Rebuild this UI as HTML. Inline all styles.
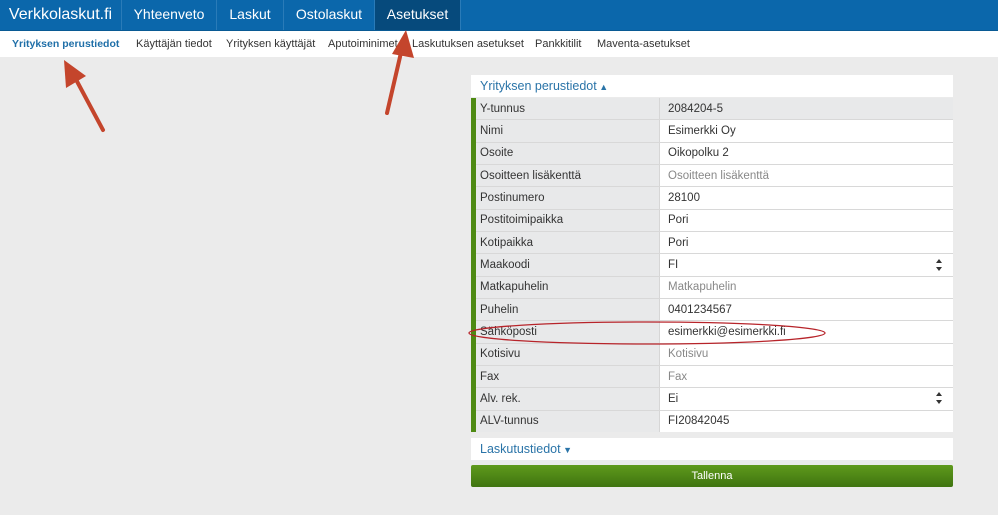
<!DOCTYPE html><html><head><style>
body{margin:0;width:998px;height:515px;background:#ebebeb;font-family:"Liberation Sans",sans-serif;position:relative;overflow:hidden}
*{box-sizing:border-box}
.nav{position:absolute;top:0;left:0;width:998px;height:31px;background:#0b67ab;border-bottom:1px solid #095a94}
.nav div{position:absolute;top:0;height:30px;line-height:29px;color:#fff;font-size:14px;text-align:center;border-right:1px solid #2a7bb8}
.sub{position:absolute;top:31px;left:0;width:998px;height:26px;background:#fff;font-size:11px}
.sub span{position:absolute;top:7px;color:#333}
.panel{position:absolute;left:471px;width:482px;background:#fff}
.tbl{position:absolute;left:471px;top:98px;width:482px;height:334px;display:flex;flex-direction:column;border-left:5px solid #4e8a13;background:#fff}
.row{flex:1;display:flex;border-bottom:1px solid #d8d8d8;font-size:11.5px;color:#333}
.row:last-child{border-bottom:0}
.row .l{width:184px;background:#e8e9ea;border-right:1px solid #d6d6d6;padding-left:4px;display:flex;align-items:center}
.row .v{flex:1;padding-left:8px;display:flex;align-items:center;position:relative}
.row .v.p{color:#888}
</style></head><body>
<div class="nav">
<div style="left:0;width:122px;font-size:16px">Verkkolaskut.fi</div>
<div style="left:122px;width:95px">Yhteenveto</div>
<div style="left:217px;width:67px">Laskut</div>
<div style="left:284px;width:91px">Ostolaskut</div>
<div style="left:375px;width:86px;background:#064a7c">Asetukset</div>
</div>
<div class="sub">
<span style="left:12px;color:#1f6fa8;font-weight:bold;font-size:10.5px;top:7px">Yrityksen perustiedot</span>
<span style="left:136px">Käyttäjän tiedot</span>
<span style="left:226px">Yrityksen käyttäjät</span>
<span style="left:328px">Aputoiminimet</span>
<span style="left:412px">Laskutuksen asetukset</span>
<span style="left:535px">Pankkitilit</span>
<span style="left:597px">Maventa-asetukset</span>
</div>
<div class="panel" style="top:75px;height:22px"><span style="position:absolute;left:9px;top:4px;font-size:12.5px;color:#2a74a8">Yrityksen perustiedot<span style="font-size:9px"> ▲</span></span></div>
<div class="tbl">
<div class="row"><div class="l">Y-tunnus</div><div class="v" style="background:#e8e9ea">2084204-5</div></div>
<div class="row"><div class="l">Nimi</div><div class="v">Esimerkki Oy</div></div>
<div class="row"><div class="l">Osoite</div><div class="v">Oikopolku 2</div></div>
<div class="row"><div class="l">Osoitteen lisäkenttä</div><div class="v p">Osoitteen lisäkenttä</div></div>
<div class="row"><div class="l">Postinumero</div><div class="v">28100</div></div>
<div class="row"><div class="l">Postitoimipaikka</div><div class="v">Pori</div></div>
<div class="row"><div class="l">Kotipaikka</div><div class="v">Pori</div></div>
<div class="row"><div class="l">Maakoodi</div><div class="v">FI</div></div>
<div class="row"><div class="l">Matkapuhelin</div><div class="v p">Matkapuhelin</div></div>
<div class="row"><div class="l">Puhelin</div><div class="v">0401234567</div></div>
<div class="row"><div class="l">Sähköposti</div><div class="v">esimerkki@esimerkki.fi</div></div>
<div class="row"><div class="l">Kotisivu</div><div class="v p">Kotisivu</div></div>
<div class="row"><div class="l">Fax</div><div class="v p">Fax</div></div>
<div class="row"><div class="l">Alv. rek.</div><div class="v">Ei</div></div>
<div class="row"><div class="l">ALV-tunnus</div><div class="v">FI20842045</div></div>
</div>
<div class="panel" style="top:438px;height:22px"><span style="position:absolute;left:9px;top:4px;font-size:12.5px;color:#2a74a8">Laskutustiedot<span style="font-size:9px"> ▼</span></span></div>
<div style="position:absolute;left:471px;top:465px;width:482px;height:22px;background:linear-gradient(#5f9a1c,#3f7410);border-radius:2px;color:#fff;font-size:11px;text-align:center;line-height:22px">Tallenna</div>
<svg width="998" height="515" style="position:absolute;left:0;top:0">
<g fill="#333"><path d="M936 263l3 -4 3 4z M936 267l3 4 3 -4z M936 396l3 -4 3 4z M936 400l3 4 3 -4z"/></g>
<g stroke="#c4452c" stroke-width="4" fill="none" stroke-linecap="round">
<path d="M103 130L72 72"/>
<path d="M387 113L403 44"/>
</g>
<g fill="#c4452c"><path d="M64 60L66 88L86 76Z"/><path d="M406 30L392 54L414 58Z"/></g>
<ellipse cx="647" cy="333" rx="178" ry="11" fill="none" stroke="#b7242a" stroke-width="1.3"/>
</svg>
</body></html>
